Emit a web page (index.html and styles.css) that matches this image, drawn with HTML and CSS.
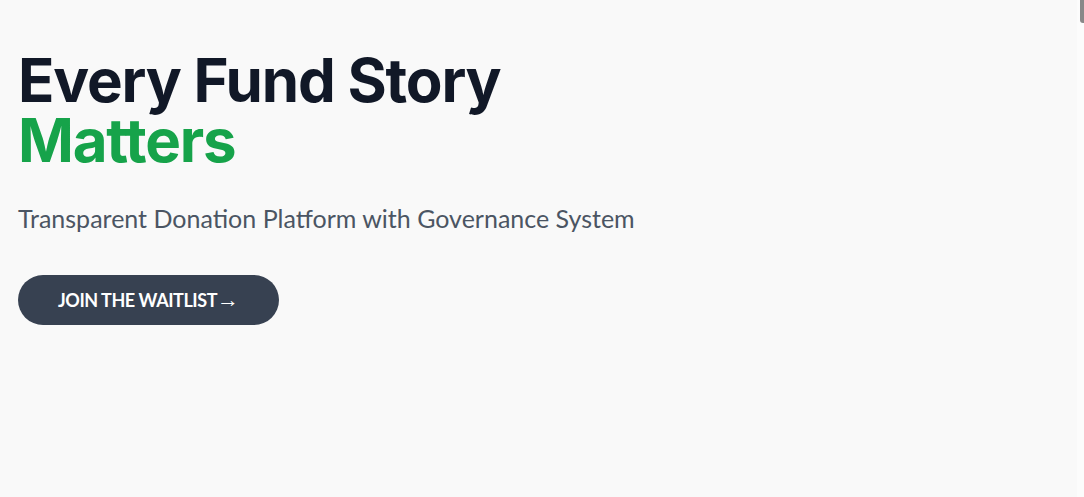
FILE: index.html
```html
<!DOCTYPE html>
<html lang="en">
<head>
<meta charset="utf-8">
<title>Every Fund Story Matters</title>
<link rel="stylesheet" href="styles.css">
</head>
<body>
<main class="hero">
  <h1 class="hero-title">
    <span class="title-line">Every Fund Story</span>
    <span class="title-line title-accent">Matters</span>
  </h1>
  <p class="hero-subtitle">Transparent Donation Platform with Governance System</p>
  <div class="hero-actions">
    <a class="btn-waitlist" href="#">JOIN THE WAITLIST<span class="arrow">→</span></a>
  </div>
</main>
<div class="scrollbar" aria-hidden="true"><div class="scrollbar-thumb"></div></div>
</body>
</html>
```

FILE: styles.css
```css
html {
  background: #f9f9f9;
}
body {
  margin: 0;
  background: #f9f9f9;
  font-family: "Lato", "Liberation Sans", sans-serif;
}
.hero {
  padding: 50px 18px 0;
  display: flex;
  flex-direction: column;
  align-items: flex-start;
}
.hero-title {
  margin: 0;
  font-family: "Inter", "Liberation Sans", sans-serif;
  font-weight: 700;
  font-size: 60px;
  line-height: 60px;
  color: #111827;
  letter-spacing: -1.2px;
}
.title-line {
  display: block;
}
.title-accent {
  color: #16a34a;
}
.hero-subtitle {
  margin: 32px 0 0;
  font-size: 25px;
  line-height: 32px;
  color: #4b5563;
}
.hero-actions {
  margin-top: 41px;
}
.btn-waitlist {
  display: inline-flex;
  align-items: center;
  height: 50px;
  box-sizing: border-box;
  padding: 0 40px;
  border-radius: 25px;
  background: #374151;
  color: #ffffff;
  text-decoration: none;
  font-weight: 700;
  font-size: 18px;
  letter-spacing: -0.45px;
}
.arrow {
  margin-left: 0;
  font-family: "Liberation Serif", serif;
  font-weight: 400;
  font-size: 22px;
  line-height: 1;
  letter-spacing: 0;
}
.scrollbar {
  position: fixed;
  top: 0;
  right: 0;
  width: 7px;
  height: 100%;
  background: #fcfcfc;
  display: flex;
  justify-content: flex-end;
  align-items: flex-start;
}
.scrollbar-thumb {
  width: 4px;
  height: 23px;
  background: #888888;
  border-radius: 0 0 0 3px;
}
```
